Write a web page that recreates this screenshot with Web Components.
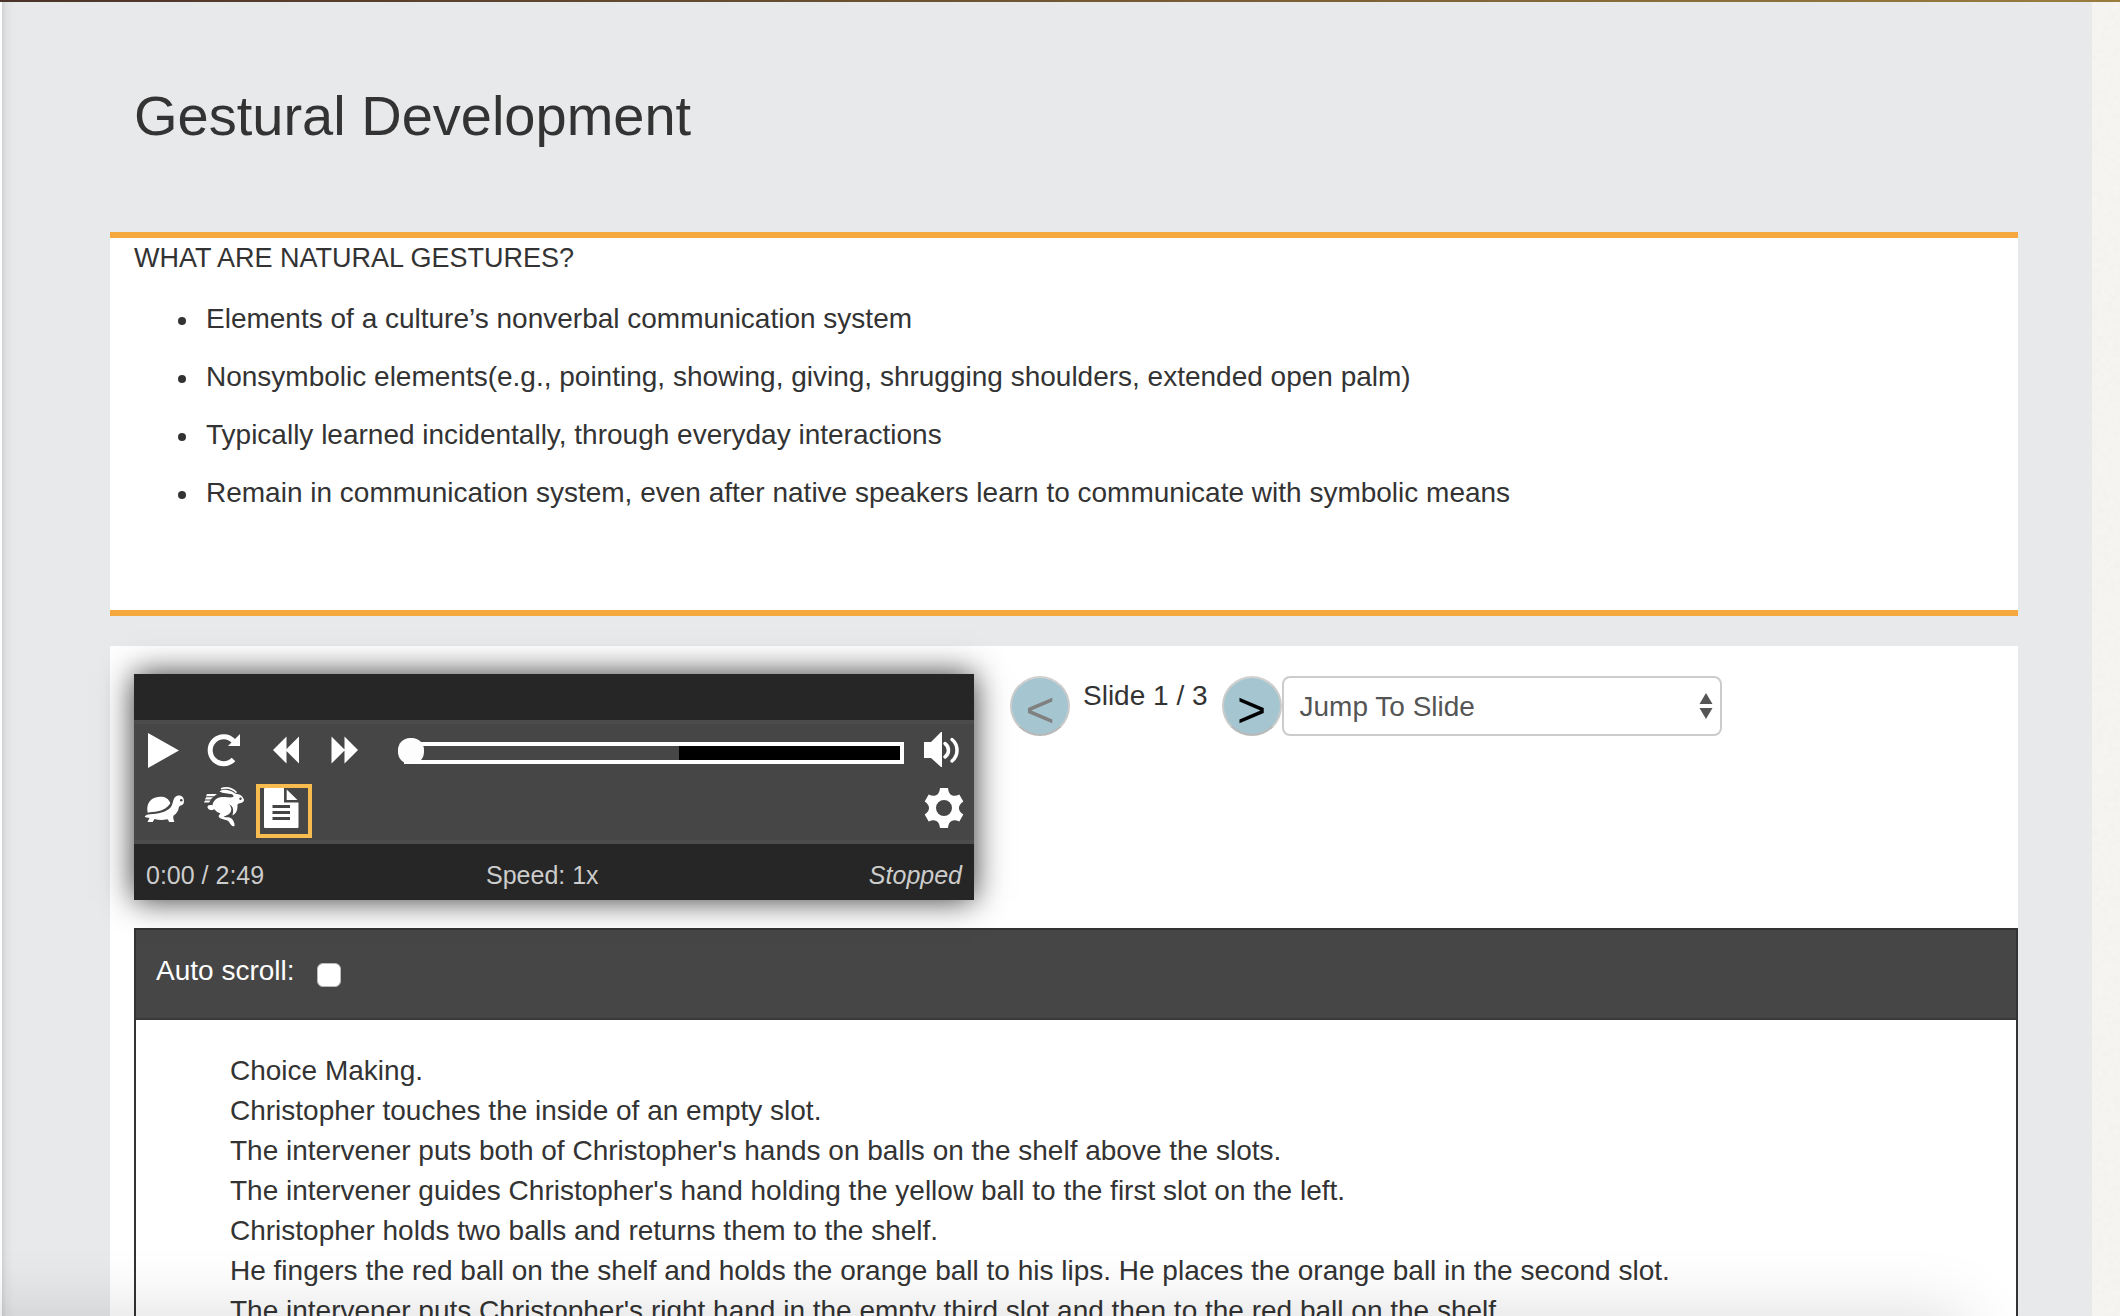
<!DOCTYPE html>
<html lang="en">
<head>
<meta charset="utf-8">
<title>Gestural Development</title>
<style>
html, body { margin: 0; height: 100%; }
body { background: #fff; color: #333; font: 28px/40px "Liberation Sans", Helvetica, Arial, sans-serif; overflow: hidden; }
</style>
</head>
<body>
<lesson-page>
  <span slot="title">Gestural Development</span>
  <slide-card>
    <span slot="heading">WHAT ARE NATURAL GESTURES?</span>
    <slide-point>Elements of a culture’s nonverbal communication system</slide-point>
    <slide-point>Nonsymbolic elements(e.g., pointing, showing, giving, shrugging shoulders, extended open palm)</slide-point>
    <slide-point>Typically learned incidentally, through everyday interactions</slide-point>
    <slide-point>Remain in communication system, even after native speakers learn to communicate with symbolic means</slide-point>
  </slide-card>
  <media-panel>
    <media-player slot="player"></media-player>
    <slide-nav slot="nav"></slide-nav>
    <transcript-box>
      <div>Choice Making.</div>
      <div>Christopher touches the inside of an empty slot.</div>
      <div>The intervener puts both of Christopher's hands on balls on the shelf above the slots.</div>
      <div>The intervener guides Christopher's hand holding the yellow ball to the first slot on the left.</div>
      <div>Christopher holds two balls and returns them to the shelf.</div>
      <div>He fingers the red ball on the shelf and holds the orange ball to his lips. He places the orange ball in the second slot.</div>
      <div>The intervener puts Christopher's right hand in the empty third slot and then to the red ball on the shelf.</div>
    </transcript-box>
  </media-panel>
</lesson-page>
<script>
function define(name, html, setup) {
  const tpl = document.createElement('template');
  tpl.innerHTML = html;
  customElements.define(name, class extends HTMLElement {
    constructor() {
      super();
      this.attachShadow({ mode: 'open' }).append(tpl.content.cloneNode(true));
    }
    connectedCallback() { if (setup) setup(this, this.shadowRoot); }
  });
}

define('lesson-page', `
<style>
:host { display: flex; flex-direction: column; height: 100%; overflow: hidden; }
.topbar { flex: none; height: 2px; background: linear-gradient(90deg, #4b3329, #997c3e); }
.row { flex: 1; min-height: 0; display: flex; padding-left: 2px; }
main { flex: 1; min-width: 0; box-sizing: border-box; padding: 0 74px 0 108px; background: linear-gradient(90deg, #cfd1d3, #dfe1e2 4px, #e8e9eb 12px); overflow: hidden; }
h1 { margin: 0; padding: 82px 24px 84px; font-size: 56px; line-height: 64px; font-weight: 400; }
.paper { flex: none; width: 28px; background: #f7f5f1; }
.paper svg { display: block; width: 100%; height: 100%; }
.glow { position: fixed; top: 100%; left: -80px; right: 156px; height: 120px; box-shadow: 0 0 70px rgba(0,0,0,.15); pointer-events: none; }
</style>
<div class="topbar"></div>
<div class="row">
  <main><h1><slot name="title"></slot></h1><slot></slot></main>
  <div class="paper"><svg aria-hidden="true"><filter id="grain" x="0" y="0" width="100%" height="100%"><feTurbulence type="fractalNoise" baseFrequency=".18" numOctaves="2"/><feColorMatrix values="0 0 0 0 .87  0 0 0 0 .86  0 0 0 0 .83  .9 0 0 0 -.2"/></filter><rect width="100%" height="100%" filter="url(#grain)"/></svg></div>
</div>
<div class="glow"></div>`);

define('slide-card', `
<style>
:host { display: block; background: #fff; border: solid #f4a83d; border-width: 6px 0; padding: 0 24px 97px; margin-bottom: 30px; }
h2 { margin: 0 0 21px; font-size: 27px; font-weight: 400; }
.list { display: flex; flex-direction: column; gap: 18px; padding-left: 44px; }
</style>
<h2><slot name="heading"></slot></h2>
<div class="list" role="list"><slot></slot></div>`);

define('slide-point', `
<style>
:host { display: flex; gap: 20px; }
:host::before { content: ""; flex: none; width: 8px; height: 8px; margin-top: 18px; border-radius: 50%; background: currentColor; }
</style><span><slot></slot></span>`,
  el => el.setAttribute('role', 'listitem'));

define('media-panel', `
<style>
:host { display: block; background: #fff; padding: 28px 0 0 24px; }
.top { display: flex; align-items: flex-start; gap: 36px; margin-bottom: 28px; }
</style>
<div class="top"><slot name="player"></slot><slot name="nav"></slot></div>
<slot></slot>`);

function gearPath(cx, cy) {
  const turn = (x, y, deg) => {
    const a = deg * Math.PI / 180;
    return (cx + x * Math.cos(a) - y * Math.sin(a)).toFixed(2) + ' ' + (cy + x * Math.sin(a) + y * Math.cos(a)).toFixed(2);
  };
  let d = 'M' + turn(-4, -20, 0);
  for (let k = 0; k < 360; k += 60)
    d += 'L' + turn(4, -20, k) + 'C' + turn(4.5, -13, k) + ' ' + turn(9, -10.4, k) + ' ' + turn(-4, -20, k + 60);
  return d + `ZM${cx - 8} ${cy}a8 8 0 1 0 16 0a8 8 0 1 0 -16 0Z`;
}

const icons = {
  play: '<path d="M12 9L43 26.500L12 44Z"/>',
  restart: '<path d="M37.500 17A13.500 13.500 0 1 0 37.500 35.500" fill="none" stroke="#fff" stroke-width="5"/><path d="M44 10V22H32Z"/>',
  rewind: '<path d="M17 26L30.500 12.500V39.500ZM29.500 26L43 12.500V39.500Z"/>',
  forward: '<path d="M15.500 12.500L29 26L15.500 39.500ZM28.500 12.500L42 26L28.500 39.500Z"/>',
  volume: '<path d="M10 18H17L27 8H28V43H27L17 34H10Z"/><path d="M31 19.500A8.300 8.300 0 0 1 31 33M38 15.500A14 14 0 0 1 38 37" fill="none" stroke="#fff" stroke-width="3.500" stroke-linecap="round"/>',
  slower: '<path d="M11.700 28.700C10.500 23 12 18.500 15.500 15.500C20 12 27 12.300 30.500 14.200C32.500 15.500 34 17.500 34.300 19.500C31 24 27 26.400 22 27.300C18 28 14.500 28.300 11.700 28.700Z"/><path d="M8.700 32.500C10 31 12 30.300 14 30.200C22 29.700 30 28.500 34.500 23.500C37.300 20 36.500 16 39 13.200C41 10.800 45 10.800 47 13.400C48.300 15.300 48.300 18 47.300 20C46 22 43.500 21 42.800 23.500C42.500 27 40.500 29.500 37.700 31.500C36.500 33 37.800 36 38.300 38H33C32.700 36.500 32 35.500 31 35.300C27 36.500 22.500 36.200 18.500 35L16.700 38H11.500C12 36.500 13 35.500 13.500 34C12 33.500 9.500 33.600 8.700 32.500Z"/><circle cx="45.300" cy="16.200" r="1.300" fill="#444"/>',
  faster: '<path d="M11 10H21L18 12.300H10Z"/><path d="M10 13.300H17L14.500 15.600H9Z"/><path d="M9 16.600H14.500L13 18.600H8Z"/><path d="M25 4.800C30 3 36 4 40.500 8.600" fill="none" stroke="#fff" stroke-width="1.600"/><path d="M23.500 7.500C26 5.300 31 5 36 7.600C38.500 9 39.500 10 40.500 10C43.500 9.500 46.500 12 48 15.500C48.200 17.500 46.500 19 44 19.200C42 19.300 41 20.500 41.500 22.500C41.500 26.500 40.200 29.500 36.500 31.500C37.500 27 38 22.500 33 20.300C36 23.500 36 27 33.500 29.500C31.500 31.500 29 32 27.500 32.700C29.500 33.700 33 32.500 35.500 34.500C37.500 36.500 38.800 39 38.500 42C36.500 43 34.500 40.500 33.300 38.200C32 35.800 28 36 25 34.500C21.500 32.800 22.500 31.500 24.500 29.500C22 28.800 20 27.500 18.500 25.300C16.500 26.800 12.500 26.300 11.500 23.500C11.300 21.200 13.500 20.700 16.500 21.300C17 16.500 21 13.500 26 13C31 12.800 34 14 37 13C38 12.300 37.500 11 36 10.200C32 9.500 27 9.500 23.500 7.500Z"/><circle cx="44.500" cy="14.800" r="1.200" fill="#444"/>',
  transcript: '<path d="M9 4H28V18.500H42.500V43Q42.500 44 41.500 44H9Q8 44 8 43V5Q8 4 9 4Z"/><path d="M30.700 5.500L41.500 16H30.700Z"/><path d="M16.500 22.500H34M16.500 28.500H34M16.500 34.500H34" stroke="#444" stroke-width="3"/>',
  settings: `<path fill-rule="evenodd" d="${gearPath(30, 24)}"/>`
};

define('icon-button', `
<style>
:host { display: block; flex: none; width: 56px; height: 54px; }
button { display: block; width: 100%; height: 100%; box-sizing: border-box; margin: 0; padding: 0; border: 0; background: none; cursor: pointer; }
:host([active]) button { box-shadow: inset 0 0 0 4px #f8bb4d; }
svg { display: block; fill: #fff; }
</style>
<button type="button"></button>`, (el, root) => {
  const b = root.querySelector('button');
  b.setAttribute('aria-label', el.getAttribute('label'));
  b.innerHTML = `<svg width="56" height="54" viewBox="0 0 56 54" aria-hidden="true">${icons[el.getAttribute('icon')]}</svg>`;
});

define('media-player', `
<style>
:host { display: block; flex: none; width: 840px; background: #262626; box-shadow: 0 0 30px rgba(0,0,0,.8); }
.head { height: 46px; }
.controls { display: flex; flex-direction: column; gap: 6px; background: #464646; border: solid #4c4c4c; border-width: 4px 0; padding: 0 4px 2px 2px; }
.line { display: flex; align-items: center; gap: 4px; }
.push { flex: 1; }
input { flex: 1; min-width: 0; appearance: none; height: 26px; margin: 4px 6px 0 22px; background: none; }
input::-webkit-slider-runnable-track { box-sizing: border-box; height: 22px; margin-left: 6px; border: 4px solid #fff; background: linear-gradient(90deg, #464646 55%, #000 55%); }
input::-webkit-slider-thumb { appearance: none; width: 26px; height: 26px; margin: -8px 0 0 -10px; border-radius: 12px; background: #fdfdfd; }
.status { display: grid; grid-template-columns: 5fr 7fr; padding: 11px 12px 5px; font-size: 25px; color: #ccc; }
.group { display: flex; justify-content: space-between; }
</style>
<div class="head"></div>
<div class="controls">
  <div class="line">
    <icon-button icon="play" label="Play"></icon-button>
    <icon-button icon="restart" label="Restart"></icon-button>
    <icon-button icon="rewind" label="Rewind"></icon-button>
    <icon-button icon="forward" label="Forward"></icon-button>
    <input type="range" min="0" max="169" value="0" aria-label="Seek">
    <icon-button icon="volume" label="Volume"></icon-button>
  </div>
  <div class="line">
    <icon-button icon="slower" label="Slower"></icon-button>
    <icon-button icon="faster" label="Faster"></icon-button>
    <icon-button icon="transcript" label="Transcript" active></icon-button>
    <span class="push"></span>
    <icon-button icon="settings" label="Preferences"></icon-button>
  </div>
</div>
<div class="status"><span>0:00 / 2:49</span><div class="group"><span>Speed: 1x</span><i>Stopped</i></div></div>`);

define('slide-nav', `
<style>
:host { display: flex; align-items: flex-start; padding-top: 2px; }
button { flex: none; width: 60px; height: 60px; box-sizing: border-box; margin: 0; padding: 8px 0 0; border: 2px solid; border-color: #d2d2d2 #cacaca #b9b9b9; border-radius: 50%; background: #a5c6d0; color: #000; font: 50px/48px "Liberation Sans", Arial, sans-serif; }
button:disabled { color: #808080; }
.count { padding: 0 14px 0 13px; white-space: nowrap; }
.pick { position: relative; }
select { display: block; width: 440px; height: 60px; box-sizing: border-box; margin: 0; padding: 1px 16px 0; appearance: none; border: 2px solid #ccc; border-radius: 8px; background: #fff; color: #555; font: inherit; }
svg { position: absolute; right: 8px; top: 16px; pointer-events: none; fill: #555; }
</style>
<button type="button" disabled aria-label="Previous slide">&lt;</button>
<span class="count">Slide 1 / 3</span>
<button type="button" aria-label="Next slide">&gt;</button>
<div class="pick">
  <select aria-label="Jump To Slide"><option>Jump To Slide</option></select>
  <svg width="16" height="28" viewBox="0 0 16 28" aria-hidden="true"><path d="M8 1L14.500 12H1.500ZM8 27L14.500 16H1.500Z"/></svg>
</div>`);

define('transcript-box', `
<style>
:host { display: block; border: 2px solid #333; background: #fff; }
.bar { display: flex; align-items: center; gap: 22px; padding: 21px 20px 27px; background: #464646; border-bottom: 2px solid #3a3a3a; color: #fff; }
input { appearance: none; box-sizing: border-box; width: 24px; height: 24px; margin: 8px 0 0; border: 1px solid #bbb; border-radius: 6px; background: #fff; }
.text { padding: 31px 94px; }
</style>
<div class="bar"><label for="auto">Auto scroll:</label><input type="checkbox" id="auto"></div>
<div class="text"><slot></slot></div>`);
</script>
</body>
</html>
